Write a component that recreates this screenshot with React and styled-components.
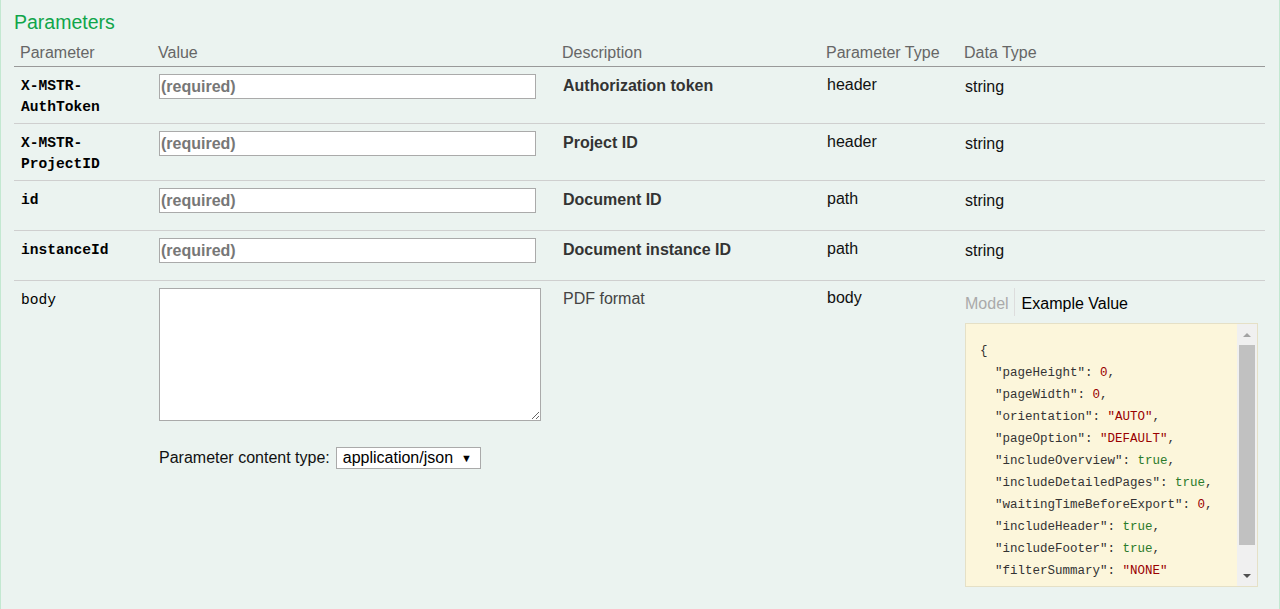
import React from 'react';
import styled, { createGlobalStyle } from 'styled-components';

const GlobalStyle = createGlobalStyle`
  html, body {
    margin: 0;
    padding: 0;
    background: #ebf3f0;
  }
  body {
    font-family: "Liberation Sans", Arial, sans-serif;
    color: #333;
  }
`;

const COLS = '138px 404px 264px 138px 1fr';

const params = [
  { name: 'X-MSTR-AuthToken', desc: 'Authorization token', type: 'header', height: 57 },
  { name: 'X-MSTR-ProjectID', desc: 'Project ID', type: 'header', height: 57 },
  { name: 'id', desc: 'Document ID', type: 'path', height: 50 },
  { name: 'instanceId', desc: 'Document instance ID', type: 'path', height: 50 },
];

const example = [
  ['pageHeight', '0', 'num'],
  ['pageWidth', '0', 'num'],
  ['orientation', '"AUTO"', 'str'],
  ['pageOption', '"DEFAULT"', 'str'],
  ['includeOverview', 'true', 'lit'],
  ['includeDetailedPages', 'true', 'lit'],
  ['waitingTimeBeforeExport', '0', 'num'],
  ['includeHeader', 'true', 'lit'],
  ['includeFooter', 'true', 'lit'],
  ['filterSummary', '"NONE"', 'str'],
];

function App() {
  return (
    <Styled.Panel>
      <GlobalStyle />
      <Styled.Heading>Parameters</Styled.Heading>
      <Styled.HeadRow>
        <Styled.Th>Parameter</Styled.Th>
        <Styled.Th>Value</Styled.Th>
        <Styled.Th>Description</Styled.Th>
        <Styled.Th>Parameter Type</Styled.Th>
        <Styled.Th>Data Type</Styled.Th>
      </Styled.HeadRow>

      {params.map((p) => (
        <Styled.Row key={p.name} $height={p.height}>
          <Styled.NameCell $bold>{p.name}</Styled.NameCell>
          <Styled.ValueCell>
            <Styled.Input placeholder="(required)" />
          </Styled.ValueCell>
          <Styled.DescCell $bold>{p.desc}</Styled.DescCell>
          <Styled.TypeCell>{p.type}</Styled.TypeCell>
          <Styled.DataCell>string</Styled.DataCell>
        </Styled.Row>
      ))}

      <Styled.Row $last>
        <Styled.NameCell>body</Styled.NameCell>
        <Styled.ValueCell>
          <Styled.TextArea />
          <Styled.ContentType>
            <span>Parameter content type:</span>
            <Styled.SelectBox>
              <span>application/json</span>
              <Styled.Caret>▼</Styled.Caret>
            </Styled.SelectBox>
          </Styled.ContentType>
        </Styled.ValueCell>
        <Styled.DescCell $plain>PDF format</Styled.DescCell>
        <Styled.TypeCell $body>body</Styled.TypeCell>
        <Styled.SnippetCell>
          <Styled.Tabs>
            <Styled.Tab $muted>Model</Styled.Tab>
            <Styled.Tab>Example Value</Styled.Tab>
          </Styled.Tabs>
          <Styled.CodeBox>
            <Styled.Code>
              <div>{'{'}</div>
              {example.map(([k, v, kind], i) => (
                <div key={k}>
                  {'  '}"{k}": <Styled.Token $kind={kind}>{v}</Styled.Token>
                  {i < example.length - 1 ? ',' : ''}
                </div>
              ))}
              <div>{'}'}</div>
            </Styled.Code>
            <Styled.Scrollbar>
              <Styled.ScrollButton>
                <svg width="8" height="4" viewBox="0 0 8 4">
                  <polygon points="0,4 4,0 8,4" fill="#a3a3a3" />
                </svg>
              </Styled.ScrollButton>
              <Styled.Thumb />
              <Styled.ScrollButton $bottom>
                <svg width="8" height="4" viewBox="0 0 8 4">
                  <polygon points="0,0 8,0 4,4" fill="#505050" />
                </svg>
              </Styled.ScrollButton>
            </Styled.Scrollbar>
          </Styled.CodeBox>
        </Styled.SnippetCell>
      </Styled.Row>
    </Styled.Panel>
  );
}

const Styled = {
  Panel: styled.div`
    box-sizing: border-box;
    width: 1280px;
    min-height: 609px;
    padding: 0 14px 0 13px;
    background: #ebf3f0;
    border-left: 1px solid #c3e8d1;
    border-right: 1px solid #c3e8d1;
    display: flex;
    flex-direction: column;
  `,
  Heading: styled.h4`
    margin: 0;
    padding-top: 10px;
    font-size: 19.5px;
    line-height: 24px;
    font-weight: normal;
    color: #10a54a;
  `,
  HeadRow: styled.div`
    box-sizing: border-box;
    display: grid;
    grid-template-columns: ${COLS};
    height: 33px;
    border-bottom: 1px solid #999;
  `,
  Th: styled.div`
    padding: 9px 6px 0;
    font-size: 16px;
    line-height: 20.8px;
    color: #666;
  `,
  Row: styled.div`
    box-sizing: border-box;
    display: grid;
    grid-template-columns: ${COLS};
    height: ${(p) => (p.$last ? 'auto' : `${p.$height}px`)};
    flex: ${(p) => (p.$last ? '1' : 'none')};
    border-bottom: ${(p) => (p.$last ? 'none' : '1px solid #cfcfcf')};
    font-size: 16px;
    line-height: 20.8px;
  `,
  NameCell: styled.div`
    padding: 9px 6px 0 7px;
    font-family: "Liberation Mono", "DejaVu Sans Mono", monospace;
    font-size: 14.6px;
    font-weight: ${(p) => (p.$bold ? 'bold' : 'normal')};
    color: #000;
    overflow-wrap: break-word;
  `,
  ValueCell: styled.div`
    padding: 7px 7px 0;
    display: flex;
    flex-direction: column;
    align-items: flex-start;
  `,
  Input: styled.input`
    box-sizing: border-box;
    width: 377px;
    height: 25px;
    margin: 0;
    padding: 0 1px;
    border: 1px solid #aaa;
    background: #fff;
    font-family: "Liberation Sans", Arial, sans-serif;
    font-size: 16px;
    font-weight: bold;
    outline: none;

    &::placeholder {
      color: #777;
      opacity: 1;
    }
  `,
  TextArea: styled.textarea`
    box-sizing: border-box;
    width: 382px;
    height: 133px;
    margin: 0;
    border: 1px solid #aaa;
    background: #fff;
    resize: both;
    outline: none;
  `,
  ContentType: styled.div`
    display: flex;
    align-items: center;
    gap: 6px;
    margin-top: 26px;
    font-size: 16px;
    color: #111;
  `,
  SelectBox: styled.div`
    box-sizing: border-box;
    display: flex;
    align-items: center;
    height: 22px;
    width: 145px;
    padding: 0 8px 0 6px;
    justify-content: space-between;
    border: 1px solid #aaa;
    background: #fff;
    color: #000;
  `,
  Caret: styled.span`
    font-size: 11px;
    line-height: 1;
  `,
  DescCell: styled.div`
    padding: ${(p) => (p.$plain ? '7.5px' : '9px')} 6px 0 7px;
    font-weight: ${(p) => (p.$bold ? 'bold' : 'normal')};
    color: ${(p) => (p.$bold ? '#333' : '#444')};
  `,
  TypeCell: styled.div`
    padding: ${(p) => (p.$body ? '6.5px' : '8px')} 6px 0 7px;
    color: #111;
  `,
  DataCell: styled.div`
    padding: 9.8px 7px 0;
    color: #111;
  `,
  SnippetCell: styled.div`
    padding: 7px 0 0 7px;
    display: flex;
    flex-direction: column;
  `,
  Tabs: styled.div`
    display: flex;
    height: 28px;
  `,
  Tab: styled.div`
    padding: 4px ${(p) => (p.$muted ? '5px' : '0')} 0 ${(p) => (p.$muted ? '0' : '7px')};
    line-height: 24px;
    color: ${(p) => (p.$muted ? '#aaa' : '#000')};
    border-right: ${(p) => (p.$muted ? '1px solid #ddd' : 'none')};
  `,
  CodeBox: styled.div`
    box-sizing: border-box;
    margin-top: 7px;
    width: 293px;
    height: 264px;
    display: flex;
    background: #fcf6db;
    border: 1px solid #e5e0c6;
    overflow: hidden;
  `,
  Code: styled.pre`
    flex: 1;
    margin: 0;
    padding: 16px 0 0 14px;
    font-family: "Liberation Mono", "DejaVu Sans Mono", monospace;
    font-size: 12.5px;
    line-height: 22px;
    color: #333;
    overflow: hidden;
    white-space: pre;
  `,
  Token: styled.span`
    color: ${(p) => (p.$kind === 'lit' ? '#2a7a2a' : '#990000')};
  `,
  Scrollbar: styled.div`
    width: 20px;
    display: flex;
    flex-direction: column;
    align-items: center;
    background: #f0f0f0;
  `,
  ScrollButton: styled.div`
    height: 21px;
    width: 100%;
    display: flex;
    align-items: center;
    justify-content: center;
    margin-top: ${(p) => (p.$bottom ? 'auto' : '0')};
  `,
  Thumb: styled.div`
    width: 16px;
    height: 200px;
    background: #c1c1c1;
  `,
};

export default App;
